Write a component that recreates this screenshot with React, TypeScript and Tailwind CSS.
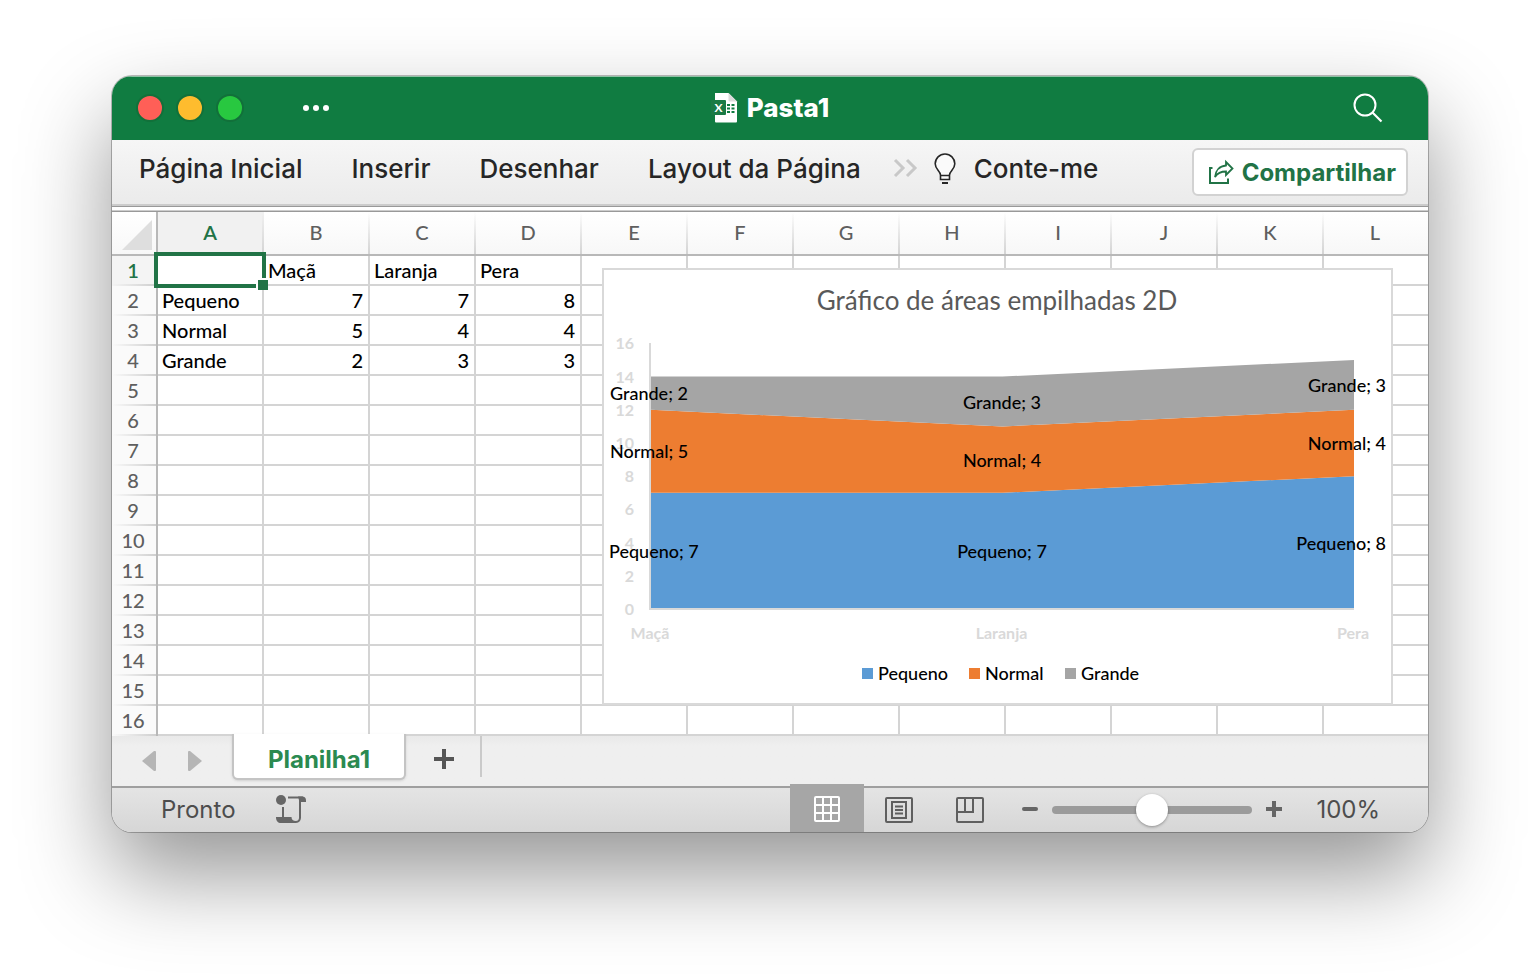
import React, { useState } from 'react';

const columns = ['A', 'B', 'C', 'D', 'E', 'F', 'G', 'H', 'I', 'J', 'K', 'L'];
const rowCount = 16;

const cells: Record<string, string> = {
  B1: 'Maçã',
  C1: 'Laranja',
  D1: 'Pera',
  A2: 'Pequeno',
  B2: '7',
  C2: '7',
  D2: '8',
  A3: 'Normal',
  B3: '5',
  C3: '4',
  D3: '4',
  A4: 'Grande',
  B4: '2',
  C4: '3',
  D4: '3',
};

const categories = ['Maçã', 'Laranja', 'Pera'];

const series = [
  { name: 'Pequeno', color: '#5b9bd5', values: [7, 7, 8] },
  { name: 'Normal', color: '#ed7d31', values: [5, 4, 4] },
  { name: 'Grande', color: '#a5a5a5', values: [2, 3, 3] },
];

const ExcelFileIcon: React.FC = () => (
  <svg width="28" height="32" viewBox="0 0 28 32" aria-hidden="true">
    <path d="M4 1h13.500L26 9.500v20a1 1 0 0 1-1 1H5a1 1 0 0 1-1-1z" fill="#fff" />
    <path d="M17.500 1L26 9.500h-7.500a1 1 0 0 1-1-1z" fill="#dcdcdc" />
    <path d="M16 12h3v2h-3zM20.500 12h3v2h-3zM16 15.500h3v2h-3zM20.500 15.500h3v2h-3zM16 19h3v2h-3zM20.500 19h3v2h-3z" fill="#107c41" />
    <rect x="0" y="8" width="15" height="15" rx="1" fill="#1a7a45" />
    <text x="7.500" y="19.500" textAnchor="middle" fontSize="12" fontWeight="700" fill="#fff" fontFamily="Lato, sans-serif">X</text>
  </svg>
);

const SearchIcon: React.FC = () => (
  <svg width="30" height="30" viewBox="0 0 30 30" fill="none" stroke="#fff" strokeWidth="2" aria-hidden="true">
    <circle cx="12" cy="12" r="10.500" />
    <path d="M19.500 19.500L28.500 28.500" strokeWidth="2.200" />
  </svg>
);

const BulbIcon: React.FC = () => (
  <svg width="22" height="32" viewBox="0 0 22 32" fill="none" stroke="#262626" strokeWidth="1.600" aria-hidden="true">
    <path d="M6.500 26.500v-4.500C6.500 18 1.200 16.500 1.200 10.800a9.800 9.800 0 0 1 19.600 0c0 5.700-5.300 7.200-5.300 11.200v4.500z" fill="#fafafa" />
    <path d="M6.500 22.500h9" />
    <path d="M8 30h6" strokeWidth="2" />
  </svg>
);

const ShareIcon: React.FC = () => (
  <svg width="26" height="26" viewBox="0 0 26 26" fill="none" stroke="#217346" strokeWidth="2" aria-hidden="true">
    <path d="M4.500 9H2v15h18v-4.500" />
    <path d="M18 3l6.500 6.500L18 16v-3.500c-5 0-8.500 1.500-11 5.500.5-6.500 4.500-11 11-11.500z" strokeWidth="1.800" />
  </svg>
);

const ScriptIcon: React.FC = () => (
  <svg width="30" height="30" viewBox="0 0 30 30" aria-hidden="true">
    <circle cx="5" cy="6" r="5" fill="#666" />
    <path d="M12 3.500h15" stroke="#666" strokeWidth="2" fill="none" />
    <path d="M22 2.500h4a4 4 0 0 1 4 4V8h-6.500z" fill="#666" />
    <path d="M24 5v19a4.500 4.500 0 0 1-4 4" stroke="#666" strokeWidth="2" fill="none" />
    <path d="M7 13v11" stroke="#666" strokeWidth="2" />
    <path d="M0 23h15.500c0 2.500 1.500 4 4.500 4v2H5c-3 0-5-2-5-6z" fill="#666" />
  </svg>
);

const TitleBar: React.FC = () => (
  <header className="grid h-16 grid-cols-[1fr_auto_1fr] items-center border-t border-[#8fc0a4] bg-[#107c41] pb-0.5">
    <div className="flex items-center gap-3 pl-6">
      <button aria-label="Fechar" className="size-7 rounded-full border-2 border-[#12703a] bg-[#ff5f57]" />
      <button aria-label="Minimizar" className="size-7 rounded-full border-2 border-[#12703a] bg-[#febc2e]" />
      <button aria-label="Ampliar" className="size-7 rounded-full border-2 border-[#12703a] bg-[#28c840]" />
      <button aria-label="Mais comandos" className="ml-[47px] flex gap-1">
        <span className="size-1.5 rounded-full bg-white" />
        <span className="size-1.5 rounded-full bg-white" />
        <span className="size-1.5 rounded-full bg-white" />
      </button>
    </div>
    <h1 className="flex items-center gap-2 text-[26px] leading-8 font-extrabold text-white">
      <ExcelFileIcon />
      Pasta1
    </h1>
    <button aria-label="Pesquisar" className="mr-[45px] justify-self-end">
      <SearchIcon />
    </button>
  </header>
);

const Ribbon: React.FC = () => (
  <nav className="flex h-16 items-center bg-linear-to-b from-[#f6f6f6] to-[#ebebeb] pr-5 pl-[27px] text-[26px] leading-8 font-medium text-[#262626]">
    <div className="flex gap-[49px] pb-1.5">
      {['Página Inicial', 'Inserir', 'Desenhar', 'Layout da Página'].map((tab) => (
        <button key={tab} className="whitespace-nowrap">
          {tab}
        </button>
      ))}
    </div>
    <button aria-label="Mais guias" className="ml-8 pb-2">
      <svg width="25" height="20" viewBox="0 0 25 20" fill="none" stroke="#c8c8c8" strokeWidth="3">
        <path d="M2 2l8 8-8 8M14 2l8 8-8 8" />
      </svg>
    </button>
    <button className="ml-4 flex items-center gap-[18px] pb-1.5 whitespace-nowrap">
      <BulbIcon />
      Conte-me
    </button>
    <button className="ml-auto flex h-12 items-center gap-2 rounded-md border-2 border-[#d2d2d2] bg-white pr-2.5 pl-3.5 text-[24px] leading-8 font-bold text-[#217346]">
      <ShareIcon />
      <span className="pt-0.5">Compartilhar</span>
    </button>
  </nav>
);

const AreaChart: React.FC = () => {
  const left = 49;
  const right = 752;
  const base = 341;
  const unit = 16.6;
  const xs = [left, (left + right) / 2, right];
  const labelXs = [48, 400, 738];
  const y = (value: number) => base - value * unit;

  // running totals under each series
  const floors = series.map((_, s) =>
    categories.map((_, c) => series.slice(0, s).reduce((sum, item) => sum + item.values[c], 0))
  );

  return (
    <svg width="787" height="433" viewBox="2 2 787 433" role="img" aria-label="Gráfico de áreas empilhadas 2D" fontFamily="Lato, sans-serif">
      <text x="395" y="42" textAnchor="middle" fontSize="26" fill="#595959">
        Gráfico de áreas empilhadas 2D
      </text>
      <g fontSize="16" fontWeight="700" fill="#d9d9d9">
        {[0, 2, 4, 6, 8, 10, 12, 14, 16].map((tick) => (
          <text key={tick} x="32" y={y(tick) + 6} textAnchor="end">
            {tick}
          </text>
        ))}
        {categories.map((category, c) => (
          <text key={category} x={xs[c] - 1} y="371" textAnchor="middle">
            {category}
          </text>
        ))}
      </g>
      {series.map((item, s) => {
        const top = xs.map((x, c) => `${x},${y(floors[s][c] + item.values[c])}`);
        const bottom = xs.map((x, c) => `${x},${y(floors[s][c])}`).reverse();
        return <polygon key={item.name} points={[...top, ...bottom].join(' ')} fill={item.color} />;
      })}
      <path d="M48 75V341H752" fill="none" stroke="#d9d9d9" strokeWidth="2" />
      <g fontSize="18" fontWeight="500" fill="#000">
        {series.map((item, s) =>
          item.values.map((value, c) => {
            const isFirst = c === 0;
            const isLast = c === categories.length - 1;
            const x = isFirst ? (s === 0 ? 7 : 8) : isLast ? 784 : labelXs[c];
            return (
              <text
                key={`${item.name}-${c}`}
                x={x}
                y={y(floors[s][c] + value / 2) + 7}
                textAnchor={isFirst ? 'start' : isLast ? 'end' : 'middle'}
              >
                {`${item.name}; ${value}`}
              </text>
            );
          })
        )}
      </g>
      <g fontSize="18" fontWeight="500" fill="#000">
        {series.map((item, s) => {
          const x = [260, 367, 463][s];
          return (
            <g key={item.name}>
              <rect x={x} y="400" width="11" height="11" fill={item.color} />
              <text x={x + 16} y="412">
                {item.name}
              </text>
            </g>
          );
        })}
      </g>
    </svg>
  );
};

const Sheet: React.FC = () => (
  <main className="relative overflow-hidden bg-white font-[Lato,sans-serif] text-[20px] leading-7">
    <table className="w-full table-fixed border-separate border-spacing-0">
      <colgroup>
        <col className="w-[46px]" />
        {columns.map((column) => (
          <col key={column} className={column === 'L' ? '' : 'w-[106px]'} />
        ))}
      </colgroup>
      <thead>
        <tr className="h-11 bg-linear-to-b from-white to-[#f7f7f7]">
          <th aria-label="Selecionar tudo" className="border-r-2 border-b-2 border-[#b8b8b8] p-0">
            <svg width="30" height="30" viewBox="0 0 30 30" className="mt-1 ml-2.5">
              <path d="M30 0v30H0z" fill="#dedede" />
            </svg>
          </th>
          {columns.map((column) => (
            <th
              key={column}
              scope="col"
              className={`border-b-2 border-[#b8b8b8] bg-[linear-gradient(to_bottom,transparent,#d4d4d4)] bg-[length:2px_100%] bg-right bg-no-repeat pt-0 pr-0.5 pb-0.5 pl-0 ${
                column === 'A' ? 'bg-[#f1f1f1] font-semibold text-[#217346]' : 'font-medium text-[#5f5f5f]'
              } ${column === 'L' ? 'bg-none' : ''}`}
            >
              {column}
            </th>
          ))}
        </tr>
      </thead>
      <tbody>
        {Array.from({ length: rowCount }, (_, i) => i + 1).map((row) => (
          <tr key={row}>
            <th
              scope="row"
              className={`h-[30px] border-r-2 border-[#b8b8b8] bg-[linear-gradient(to_right,transparent,#cfcfcf)] bg-[length:100%_2px] bg-bottom bg-no-repeat pt-0 pr-0.5 pb-0.5 pl-0 ${
                row === 1 ? 'bg-[#f4f4f4] font-semibold text-[#217346]' : 'bg-[#fafafa] font-medium text-[#5f5f5f]'
              }`}
            >
              {row}
            </th>
            {columns.map((column) => {
              const value = cells[`${column}${row}`];
              const isNumber = value !== undefined && !isNaN(Number(value));
              const isSelected = column === 'A' && row === 1;
              return (
                <td
                  key={column}
                  className={`relative h-[30px] border-b-2 border-[#d4d4d4] py-0 pl-1 font-medium whitespace-nowrap text-black ${
                    column === 'L' ? '' : 'border-r-2'
                  } ${isNumber ? 'pr-[5px] text-right' : 'pr-1 text-left'}`}
                >
                  {value}
                  {isSelected && (
                    <>
                      <span className="absolute -inset-1 z-10 border-4 border-[#217346]" />
                      <span className="absolute -right-1.5 -bottom-1.5 z-10 size-3 border-t-2 border-l-2 border-white bg-[#217346]" />
                    </>
                  )}
                </td>
              );
            })}
          </tr>
        ))}
      </tbody>
    </table>
    <div className="absolute top-14 left-[490px] z-20 border-2 border-[#d9d9d9] bg-white">
      <AreaChart />
    </div>
  </main>
);

const SheetTabs: React.FC = () => (
  <div className="flex h-[50px] items-start bg-linear-to-b from-[#e9e9e9] to-[#efefef] to-20%">
    <div className="flex gap-8 pt-[15px] pl-[30px]">
      <button aria-label="Planilha anterior">
        <svg width="14" height="20" viewBox="0 0 14 20">
          <path d="M14 1v18q0 1-1 1h-1L0 10 12 0h1q1 0 1 1z" fill="#b5b5b5" />
        </svg>
      </button>
      <button aria-label="Próxima planilha">
        <svg width="14" height="20" viewBox="0 0 14 20">
          <path d="M0 1v18q0 1 1 1h1L14 10 2 0H1Q0 0 0 1z" fill="#b5b5b5" />
        </svg>
      </button>
    </div>
    <button className="relative z-10 -mt-0.5 ml-[30px] h-[46px] w-[174px] rounded-b-md border-x-2 border-b-2 border-[#c4c4c4] bg-white pt-2 text-[24px] leading-8 font-bold text-[#2b8a50] shadow-sm">
      Planilha1
    </button>
    <button aria-label="Nova planilha" className="flex h-[46px] w-[74px] items-center justify-center pl-0.5">
      <svg width="20" height="20" viewBox="0 0 20 20" stroke="#555" strokeWidth="4">
        <path d="M10 0v20M0 10h20" />
      </svg>
    </button>
    <span className="h-[41px] w-0.5 bg-[#cacaca]" />
  </div>
);

const StatusBar: React.FC = () => {
  const [zoom, setZoom] = useState(100);

  return (
    <footer className="flex h-[46px] items-center border-t-2 border-[#9f9f9f] bg-linear-to-b from-[#e4e4e4] to-[#d6d6d6] pr-12 pl-[49px] text-[24px] leading-8 text-[#4d4d4d]">
      <span>Pronto</span>
      <button aria-label="Gravar macro" className="ml-10 pb-0.5">
        <ScriptIcon />
      </button>
      <button aria-label="Normal" className="-mt-1 ml-auto flex h-12 w-[74px] items-center justify-center bg-[#a6a6a6] pt-0.5">
        <svg width="28" height="28" viewBox="0 0 28 28" fill="none" stroke="#fff" strokeWidth="2">
          <rect x="2" y="2" width="24" height="24" rx="1" />
          <path d="M10 2v24M18 2v24M2 10h24M2 18h24" />
        </svg>
      </button>
      <button aria-label="Layout da Página" className="flex w-[70px] justify-center">
        <svg width="28" height="26" viewBox="0 0 28 26" fill="none" stroke="#5f5f5f" strokeWidth="2">
          <rect x="1" y="1" width="26" height="24" rx="1" />
          <path d="M7 5h14v16H7zM10 9.500h8M10 13h8M10 16.500h8" />
        </svg>
      </button>
      <button aria-label="Quebra de Página" className="flex w-[72px] justify-center">
        <svg width="28" height="26" viewBox="0 0 28 26" fill="none" stroke="#5f5f5f" strokeWidth="2">
          <rect x="1" y="1" width="26" height="24" rx="1" />
          <path d="M1 15h16V1M9 1v14" />
        </svg>
      </button>
      <button aria-label="Reduzir" className="flex w-[46px] justify-center pb-0.5 pl-0.5" onClick={() => setZoom(Math.max(10, zoom - 10))}>
        <span className="h-1 w-4 rounded-sm bg-[#666]" />
      </button>
      <input
        type="range"
        aria-label="Zoom"
        min={10}
        max={190}
        value={zoom}
        onChange={(event) => setZoom(Number(event.target.value))}
        className="h-2 w-[200px] appearance-none rounded-full bg-[#9b9b9b] [&::-webkit-slider-thumb]:size-8 [&::-webkit-slider-thumb]:appearance-none [&::-webkit-slider-thumb]:rounded-full [&::-webkit-slider-thumb]:bg-white [&::-webkit-slider-thumb]:shadow-[0_1px_3px_rgba(0,0,0,0.35)]"
      />
      <button aria-label="Ampliar zoom" className="flex w-11 justify-center pb-0.5" onClick={() => setZoom(Math.min(190, zoom + 10))}>
        <svg width="16" height="16" viewBox="0 0 16 16" stroke="#666" strokeWidth="4">
          <path d="M8 0v16M0 8h16" />
        </svg>
      </button>
      <span className="ml-5">{zoom}%</span>
    </footer>
  );
};

const App: React.FC = () => {
  return (
    <div className="min-h-screen overflow-hidden bg-white px-28 pt-[76px] pb-[148px] font-[Inter,sans-serif]">
      <div className="overflow-hidden rounded-[20px] shadow-[0_0_0_1px_rgba(0,0,0,0.25),0_42px_90px_rgba(0,0,0,0.42)]">
        <TitleBar />
        <Ribbon />
        <div className="h-2 bg-[linear-gradient(#ccc_2px,#999_2px,#999_3px,#fff_3px,#fff_6px,#ccc_6px,#ccc_7px,#999_7px)]" />
        <Sheet />
        <SheetTabs />
        <StatusBar />
      </div>
    </div>
  );
};

export default App;
